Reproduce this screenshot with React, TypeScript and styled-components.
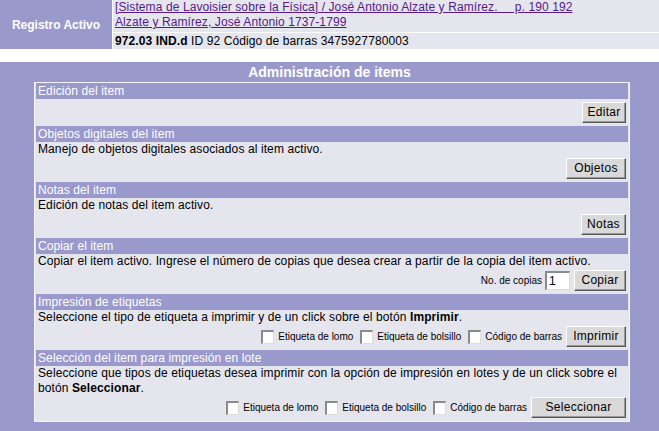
import React from 'react';
import styled, { createGlobalStyle } from 'styled-components';

const Global = createGlobalStyle`
  html, body { margin: 0; padding: 0; background: #ffffff; }
  body {
    font-family: "Liberation Sans", Arial, Helvetica, sans-serif;
    font-size: 12px;
    color: #000;
  }
`;

const PURPLE = '#9999CC';
const LIGHT = '#E5E5EE';

const Page = styled.div`
  width: 659px;
  height: 431px;
  overflow: hidden;
`;

const Record = styled.div`
  display: grid;
  grid-template-columns: 112px 1fr;
  grid-template-rows: 32px 16px;
  gap: 1px;
  background: #ffffff;
`;

const RecordLabel = styled.div`
  grid-row: 1 / span 2;
  background: ${PURPLE};
  color: #fff;
  font-weight: bold;
  font-size: 12px;
  display: flex;
  align-items: center;
  justify-content: center;
`;

const RecordCell = styled.div`
  background: ${LIGHT};
  padding: 0 2px;
  line-height: ${(p: { $lh?: number }) => p.$lh ?? 15}px;
  font-size: 12px;
  letter-spacing: 0.1px;
`;

const RecLink = styled.a`
  color: #551a8b;
  text-decoration: underline;
  white-space: pre;
`;

const Panel = styled.section`
  margin-top: 13px;
  background: ${PURPLE};
  padding-bottom: 13px;
`;

const PanelTitle = styled.div`
  color: #fff;
  font-weight: bold;
  font-size: 14px;
  line-height: 20px;
  text-align: center;
`;

const Sheet = styled.div`
  width: 592px;
  margin-left: 34px;
  background: ${LIGHT};
  border: 1px solid #f3f3f8;
  padding: 0 1px;
`;

const SectionHead = styled.div`
  background: ${PURPLE};
  color: #fff;
  height: 16px;
  line-height: 16px;
  padding-left: 2px;
  font-size: 12px;
  letter-spacing: 0.1px;
`;

const Desc = styled.div`
  padding: 0 2px;
  line-height: 15px;
  font-size: 12px;
  letter-spacing: 0.1px;
`;

const Actions = styled.div<{ $top?: number }>`
  display: flex;
  justify-content: flex-end;
  align-items: center;
  padding: ${(p) => p.$top ?? 1}px 2px 3px;
`;

const Button = styled.button<{ $w: number }>`
  width: ${(p) => p.$w}px;
  height: 21px;
  margin-left: 4px;
  padding: 0 0 2px;
  background: #d9d9d9;
  border-style: solid;
  border-width: 1px;
  border-color: #ffffff #555555 #555555 #ffffff;
  box-shadow: inset -1px -1px 0 #9a9a9a;
  font-family: "Liberation Sans", Arial, Helvetica, sans-serif;
  font-size: 12px;
  letter-spacing: 0.3px;
  color: #000;
`;

const Check = styled.label`
  display: flex;
  align-items: center;
  margin-left: 7px;
  font-size: 10px;
`;

const Box = styled.span`
  display: inline-block;
  width: 10px;
  height: 11px;
  margin-right: 4px;
  background: #fff;
  border-style: solid;
  border-width: 2px 1px 1px 2px;
  border-color: #8a8a8a #dcdcdc #dcdcdc #8a8a8a;
`;

const SmallLabel = styled.span`
  font-size: 10px;
  margin-right: 3px;
`;

const Field = styled.span`
  display: inline-block;
  width: 20px;
  height: 16px;
  line-height: 16px;
  padding-left: 2px;
  background: #fff;
  border-style: solid;
  border-width: 2px 1px 1px 2px;
  border-color: #8a8a8a #dcdcdc #dcdcdc #8a8a8a;
  font-size: 12px;
`;

const Section: React.FC<{ title: string; top?: number; desc?: React.ReactNode; children: React.ReactNode }> = ({
  title,
  top,
  desc,
  children,
}) => (
  <>
    <SectionHead>{title}</SectionHead>
    {desc && <Desc>{desc}</Desc>}
    <Actions $top={top}>{children}</Actions>
  </>
);

const Checks: React.FC = () => (
  <>
    <Check>
      <Box />
      Etiqueta de lomo
    </Check>
    <Check>
      <Box />
      Etiqueta de bolsillo
    </Check>
    <Check>
      <Box />
      Código de barras
    </Check>
  </>
);

export default function App() {
  return (
    <Page>
      <Global />
      <Record>
        <RecordLabel>Registro Activo</RecordLabel>
        <RecordCell>
          <RecLink href="#">[Sistema de Lavoisier sobre la Física] / José Antonio Alzate y Ramírez.     p. 190 192</RecLink>
          <br />
          <RecLink href="#">Alzate y Ramírez, José Antonio 1737-1799</RecLink>
        </RecordCell>
        <RecordCell $lh={16}>
          <b>972.03 IND.d</b> ID 92 Código de barras 3475927780003
        </RecordCell>
      </Record>
      <Panel>
        <PanelTitle>Administración de items</PanelTitle>
        <Sheet>
          <Section title="Edición del item" top={3}>
            <Button $w={44}>Editar</Button>
          </Section>
          <Section title="Objetos digitales del item" desc="Manejo de objetos digitales asociados al item activo.">
            <Button $w={60}>Objetos</Button>
          </Section>
          <Section title="Notas del item" desc="Edición de notas del item activo.">
            <Button $w={45}>Notas</Button>
          </Section>
          <Section
            title="Copiar el item"
            desc="Copiar el item activo. Ingrese el número de copias que desea crear a partir de la copia del item activo."
          >
            <SmallLabel>No. de copias</SmallLabel>
            <Field>1</Field>
            <Button $w={52}>Copiar</Button>
          </Section>
          <Section
            title="Impresión de etiquetas"
            desc={
              <>
                Seleccione el tipo de etiqueta a imprimir y de un click sobre el botón <b>Imprimir</b>.
              </>
            }
          >
            <Checks />
            <Button $w={60}>Imprimir</Button>
          </Section>
          <Section
            title="Selección del item para impresión en lote"
            desc={
              <>
                Seleccione que tipos de etiquetas desea imprimir con la opción de impresión en lotes y de un click sobre el
                botón <b>Seleccionar</b>.
              </>
            }
          >
            <Checks />
            <Button $w={95}>Seleccionar</Button>
          </Section>
        </Sheet>
      </Panel>
    </Page>
  );
}
